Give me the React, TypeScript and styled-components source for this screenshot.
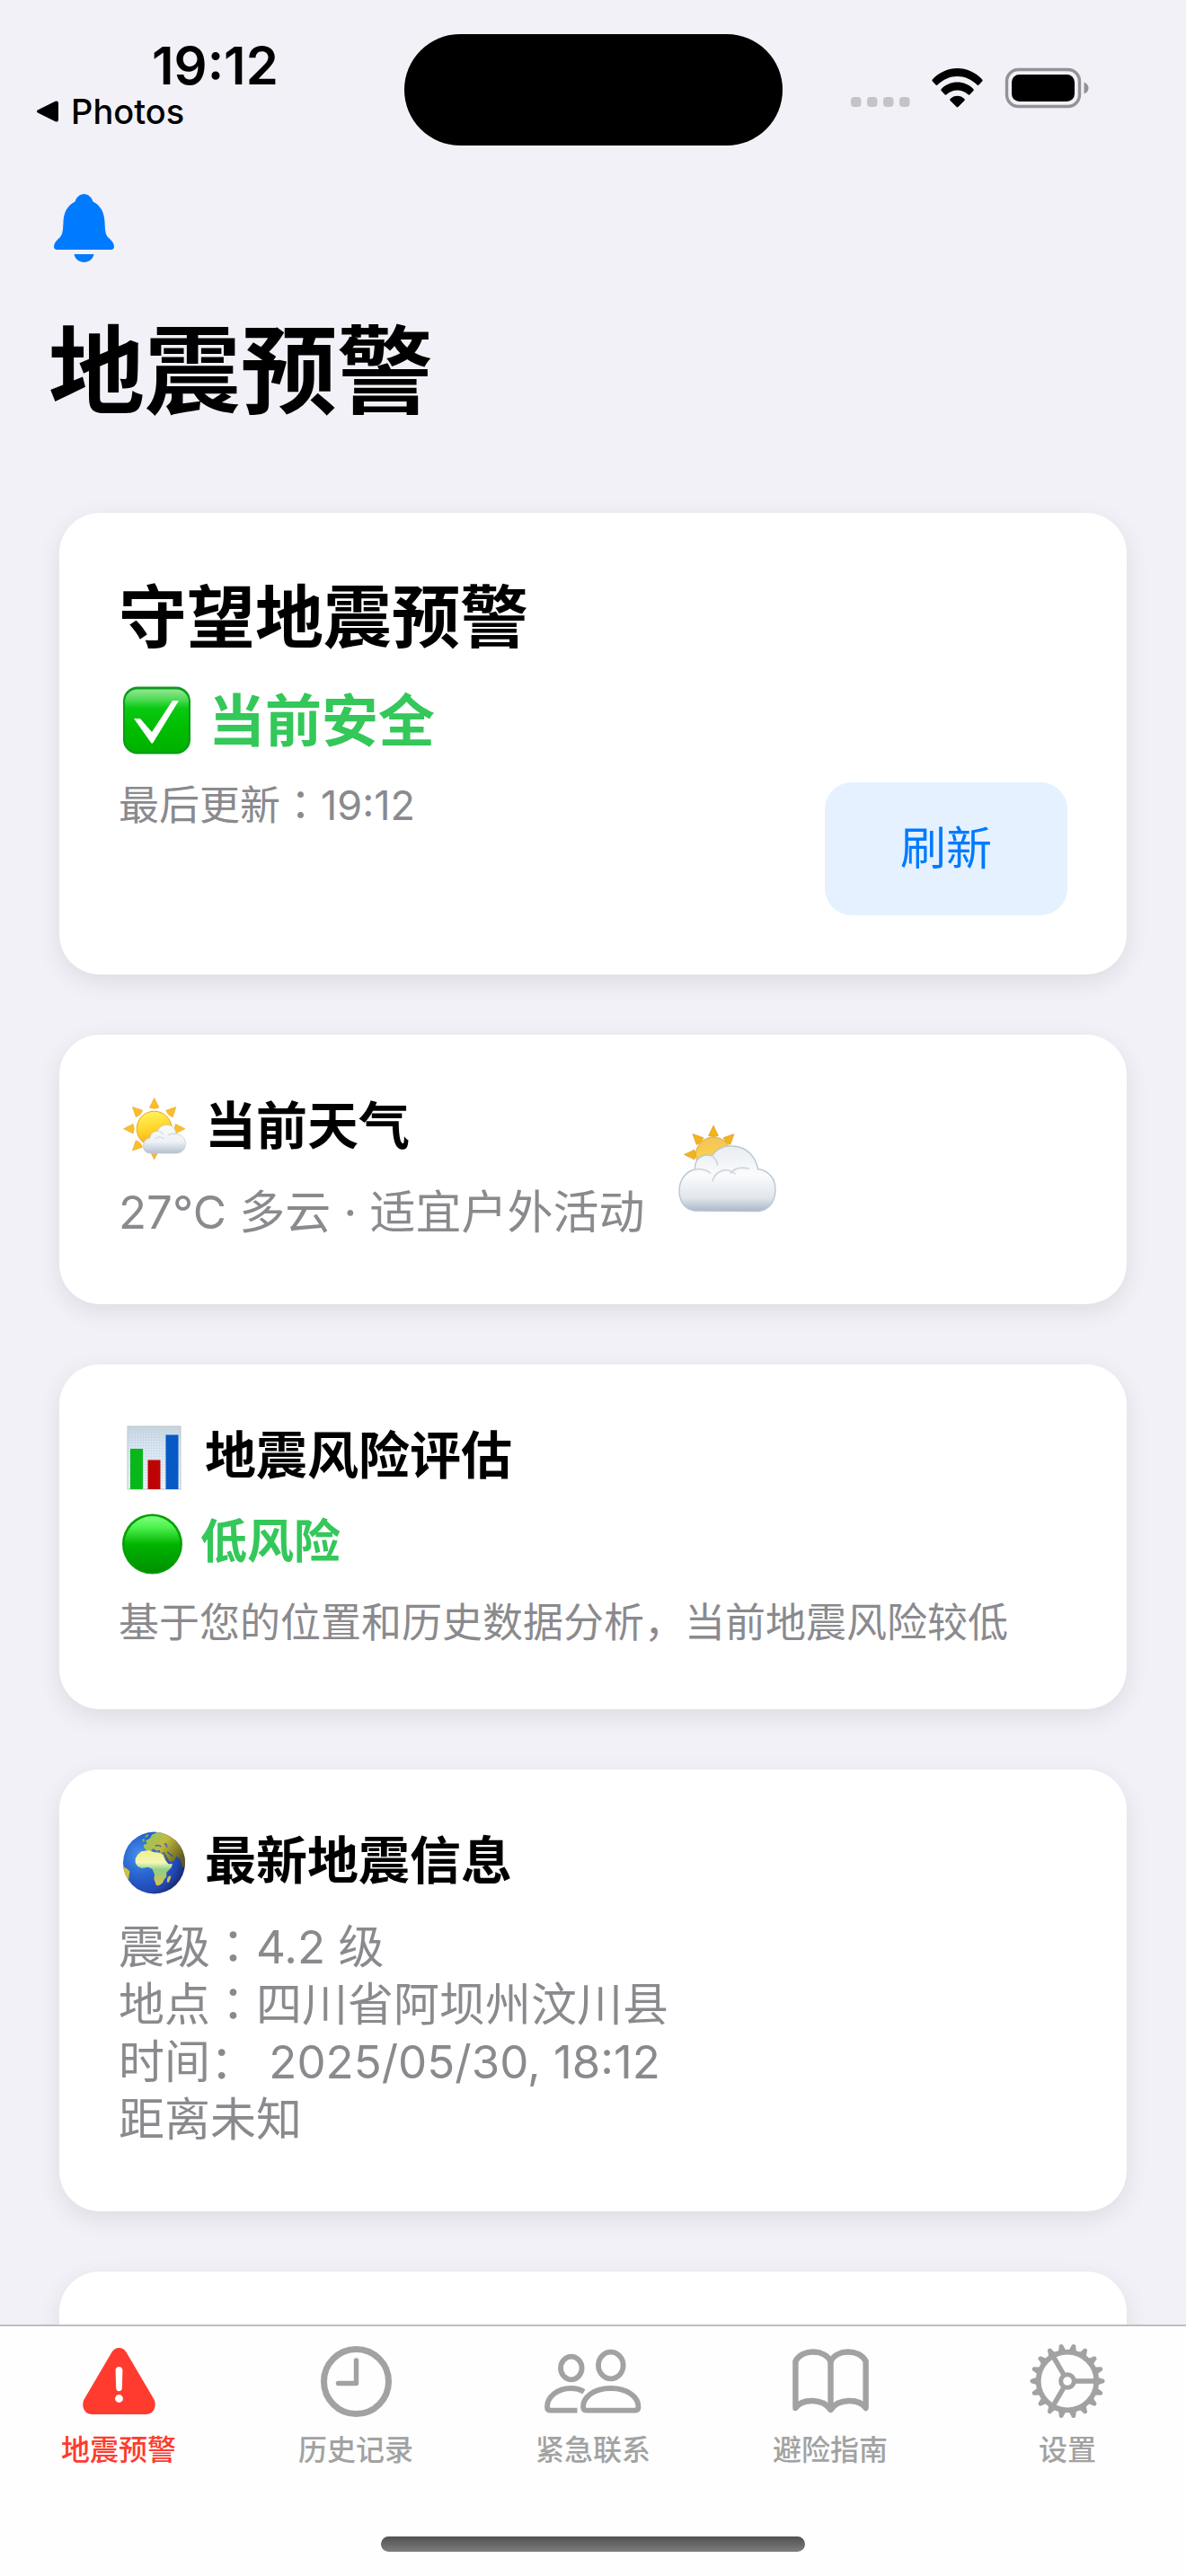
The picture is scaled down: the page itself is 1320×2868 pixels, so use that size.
import React from "react";
import styled, { createGlobalStyle } from "styled-components";

const GlobalStyle = createGlobalStyle`
  *, *::before, *::after { box-sizing: border-box; }
  body {
    margin: 0;
    background: #f2f1f7;
    color: #000;
    font-family: Inter, "Noto Sans CJK SC", sans-serif;
  }
  h1, h2, p, ul { margin: 0; padding: 0; }
  svg { display: block; flex: none; overflow: visible; }
`;

/* ---------- layout ---------- */

const Screen = styled.div`
  display: flex;
  flex-direction: column;
  height: 100vh;
`;

const StatusBar = styled.div`
  display: grid;
  grid-template-columns: 1fr 421px 1fr;
  height: 186px;
  padding-top: 38px;
  flex: none;
`;

const StatusLeft = styled.div`
  display: flex;
  flex-direction: column;
  align-items: flex-start;
  padding-left: 41px;
`;

const Clock = styled.time`
  padding-left: 128px;
  font-size: 58px;
  font-weight: 600;
  line-height: 70px;
`;

const BackLink = styled.a`
  display: flex;
  align-items: center;
  gap: 14px;
  color: inherit;
  text-decoration: none;
  font-size: 38px;
  font-weight: 500;
  line-height: 32px;
`;

const Island = styled.div`
  height: 124px;
  border-radius: 62px;
  background: #000;
`;

const StatusRight = styled.div`
  display: flex;
  align-items: center;
  gap: 25px;
  height: 44px;
  margin-top: 38px;
  padding-left: 76px;
`;

const NavBar = styled.header`
  flex: none;
`;

const NavActions = styled.div`
  display: flex;
  align-items: center;
  height: 136px;
  padding: 0 60px;
`;

const IconButton = styled.button`
  padding: 0;
  border: 0;
  background: none;
  color: #007aff;
  cursor: pointer;
`;

const PageTitle = styled.h1`
  padding: 27px 54px 0;
  font-size: 107px;
  font-weight: 700;
  line-height: 128px;
`;

const Feed = styled.main`
  display: flex;
  flex: 1;
  flex-direction: column;
  gap: 67px;
  min-height: 0;
  margin-top: 28px;
  padding: 66px 66px 67px;
  overflow-y: auto;
  scrollbar-width: none;
`;

/* ---------- cards ---------- */

const Card = styled.section`
  display: flex;
  flex: none;
  padding: 66px;
  border-radius: 45px;
  background: #fff;
  box-shadow: 0 8px 28px rgba(0, 0, 0, 0.09);
`;

const SummaryCard = styled(Card)`
  justify-content: space-between;
`;

const WeatherCard = styled(Card)`
  align-items: center;
  gap: 36px;
`;

const Stack = styled.div<{ $spaceBelow?: number }>`
  display: flex;
  flex-direction: column;
  gap: 24px;
  padding-bottom: ${(p) => p.$spaceBelow ?? 0}px;
`;

const SummaryTitle = styled.h2`
  font-size: 76px;
  font-weight: 700;
  line-height: 100px;
`;

const CardTitle = styled.h2`
  display: flex;
  align-items: center;
  gap: 16px;
  font-size: 57px;
  font-weight: 700;
  line-height: 72px;
`;

const State = styled.p<{ $large?: boolean }>`
  display: flex;
  align-items: center;
  gap: 16px;
  color: #34c759;
  font-size: ${(p) => (p.$large ? 63 : 52)}px;
  font-weight: 700;
  line-height: ${(p) => (p.$large ? 82 : 72)}px;
`;

const Note = styled.p`
  color: #8a8a8e;
  font-size: 45px;
  line-height: 60px;
`;

const Body = styled.p`
  color: #8a8a8e;
  font-size: 51px;
  line-height: 72px;
`;

const Details = styled.ul`
  padding: 4px 0;
  list-style: none;
  color: #8a8a8e;
  font-size: 51px;
  line-height: 64px;
`;

/* Full-width colon centred in its em box */
const Colon = styled.span`
  font-family: Inter, "Noto Sans CJK TC", sans-serif;
`;

const RefreshButton = styled.button`
  align-self: flex-end;
  padding: 42px 84px;
  border: 0;
  border-radius: 30px;
  background: #e5f1ff;
  color: #007aff;
  font: inherit;
  font-size: 51px;
  line-height: 64px;
  cursor: pointer;
`;

/* ---------- tab bar ---------- */

const TabBar = styled.footer`
  flex: none;
  padding-bottom: 27px;
  border-top: 2px solid #bebebf;
  background: #fefefe;
`;

const Tabs = styled.nav`
  display: grid;
  grid-template-columns: repeat(5, 1fr);
  padding-top: 16px;
`;

const Tab = styled.a<{ $active?: boolean }>`
  display: flex;
  flex-direction: column;
  align-items: center;
  gap: 12px;
  color: ${(p) => (p.$active ? "#ff3b30" : "#a2a2a2")};
  text-decoration: none;
  font-size: 32px;
  font-weight: 500;
  line-height: 40px;
`;

const TabIcon = styled.span`
  display: grid;
  place-items: center;
  height: 90px;
`;

const HomeIndicator = styled.div`
  width: 472px;
  max-width: 60%;
  height: 17px;
  margin: 76px auto 0;
  border-radius: 9px;
  background: linear-gradient(#505050, #7d7d7d);
`;

/* ---------- status and nav icons ---------- */

const BackArrow = () => (
  <svg width="24" height="24" viewBox="0 0 24 24" aria-hidden="true">
    <path d="M1.5 10.2 20.5.8Q24-.6 24 3v18q0 3.600-3.500 2.200L1.500 13.800Q-1.500 12 1.500 10.200Z" />
  </svg>
);

const SignalDots = () => (
  <svg width="65" height="44" viewBox="0 0 65 44" aria-hidden="true" fill="#c4c3c8">
    {[0, 18, 36, 54].map((x) => (
      <rect key={x} x={x} y="32" width="11.500" height="11" rx="4" />
    ))}
  </svg>
);

const Wifi = () => (
  <svg width="57" height="44" viewBox="0 0 57 44" aria-hidden="true">
    <path d="M.8 12.500C16-4.200 41-4.200 56.200 12.500q.9 1 0 2l-3.700 4q-1 .9-2 0C38 5.700 19 5.700 6.500 18.500q-1 .9-2 0l-3.700-4q-.9-1 0-2Z" />
    <path d="M10.600 23.200C20 13 37 13 46.400 23.200q.9 1 0 1.900l-3.900 4.200q-1 .9-2 0C34 22.800 23 22.800 16.500 29.300q-1 .9-2 0l-3.900-4.200q-.9-.9 0-1.900Z" />
    <path d="M20.600 34C25 29.500 32 29.500 36.400 34q.9.900 0 1.900L29.400 43q-.9.900-1.800 0L20.600 35.900q-.9-1 0-1.900Z" />
  </svg>
);

const Battery = () => (
  <svg width="93" height="44" viewBox="0 0 93 44" aria-hidden="true">
    <rect x="1.500" y="1.500" width="81" height="41" rx="13" fill="none" stroke="#939297" strokeWidth="3.400" />
    <rect x="7" y="7" width="70" height="30" rx="8.500" />
    <path d="M87.500 15.500q5 2 5 6.500t-5 6.500Z" fill="#939297" />
  </svg>
);

const Bell = () => (
  <svg width="67" height="76" viewBox="0 0 67 76" aria-hidden="true" fill="currentColor">
    <path d="M33.500 0c4.500 0 8.500 3.500 10 8.500C52 13 56 20 56.500 31c.5 10 .8 14 4 17.500 4 3.500 6.500 6.500 6.500 10 0 2.300-1.200 3.500-3.200 3.500H3.200C1.200 62 0 60.800 0 58.500c0-3.500 2.500-6.500 6.500-10 3.200-3.500 3.500-7.500 4-17.500C11 20 15 13 23.500 8.500 25 3.500 29 0 33.500 0Z" />
    <path d="M22.500 67h22c-1 5.500-5.500 9-11 9s-10-3.500-11-9Z" />
  </svg>
);

/* ---------- emoji pictures ---------- */

const CheckEmoji = () => (
  <svg width="84" height="82" viewBox="0 0 84 82" aria-hidden="true">
    <defs>
      <linearGradient id="checkFill" x1="0" y1="0" x2="0" y2="1">
        <stop offset="0" stopColor="#93e793" />
        <stop offset=".16" stopColor="#4fdb55" />
        <stop offset=".3" stopColor="#09c912" />
        <stop offset=".6" stopColor="#00be00" />
        <stop offset="1" stopColor="#00b000" />
      </linearGradient>
    </defs>
    <rect x="5" y="3.500" width="75" height="75" rx="16" fill="#0c9a1c" />
    <rect x="7" y="6.500" width="71" height="70" rx="14" fill="url(#checkFill)" />
    <path d="M17 39h7l13 15L60 19h7L38 66.500h-1.500Z" fill="#fff" />
  </svg>
);

const rays = [0, 45, 90, 135, 180, 225, 270, 315];

const SunCloudEmoji = () => (
  <svg width="80" height="72" viewBox="0 0 80 72" aria-hidden="true">
    <defs>
      <linearGradient id="sunFill" x1=".4" y1="0" x2=".6" y2="1">
        <stop offset="0" stopColor="#fff35a" />
        <stop offset=".5" stopColor="#ffd42a" />
        <stop offset="1" stopColor="#f8a01c" />
      </linearGradient>
      <linearGradient id="cloudFill" x1="0" y1="0" x2="0" y2="1">
        <stop offset="0" stopColor="#fbfcfd" />
        <stop offset=".6" stopColor="#eef1f5" />
        <stop offset="1" stopColor="#b3c0ce" />
      </linearGradient>
    </defs>
    {rays.map((a) => (
      <path key={a} d="M39.700 4.500 45 15q-5 2.500-10.500 0Z" fill={a === 180 ? "#f6b63a" : "#fbbf26"} stroke="#e9a32c" strokeWidth=".6" transform={`rotate(${a} 39.7 38.7)`} />
    ))}
    <circle cx="39.700" cy="38.700" r="19.500" fill="url(#sunFill)" stroke="#ee9f26" strokeWidth="1" />
    <path d="M35 66c-4.500 0-7.500-3.500-7.500-8 0-5 3-8.500 7.500-9 .5-5 4-8 8.500-7.500C45 37 49 34.500 53.500 34.500c6 0 10 4 10.500 10 6 .5 10.500 5 10.500 11S70 66 64.500 66Z" fill="url(#cloudFill)" stroke="#c3cdd8" strokeWidth=".8" />
    <path d="M41 50c2-3 7-3 9 0M43.500 41.500c3 .3 5 1.500 6 3.500M55 46c3-2 6-2.300 9-1.500" fill="none" stroke="#ced6df" strokeWidth="1.200" />
  </svg>
);

const CloudySunEmoji = () => (
  <svg width="112" height="102" viewBox="2 1 112 102" role="img" aria-label="多云">
    <defs>
      <linearGradient id="bigSun" x1="0" y1="0" x2="0" y2="1">
        <stop offset="0" stopColor="#f3c35c" />
        <stop offset="1" stopColor="#ffdb38" />
      </linearGradient>
      <linearGradient id="bigCloud" x1="0" y1="26" x2="0" y2="98" gradientUnits="userSpaceOnUse">
        <stop offset="0" stopColor="#e9edf1" />
        <stop offset=".45" stopColor="#fafbfc" />
        <stop offset=".8" stopColor="#e1e6ec" />
        <stop offset="1" stopColor="#aab9c9" />
      </linearGradient>
    </defs>
    {[-90, -45, 0, 45].map((a) => (
      <path key={a} d="M42 3 47.500 14.500q-5.500 2-11 0Z" fill="#f2b41c" stroke="#d99a22" strokeWidth=".6" transform={`rotate(${a} 42 35.500)`} />
    ))}
    <circle cx="42" cy="35.500" r="19.500" fill="url(#bigSun)" stroke="#e5a537" strokeWidth="1" />
    <path d="M21 98C10 96.500 4 87 4 76c0-12 7-22 17.500-24C21 42 27 35.500 36 36c1.500 0 3 .3 4.500 1C45 29.500 54 25 64 26c15 1 25 11 27.500 25.500C103 53 111 62 111 74c0 13-6.500 23-18.500 24.500Z" fill="url(#bigCloud)" stroke="#b9c5d1" strokeWidth="1.400" />
    <path d="M41 65c2-8 10-14 18-12 3 .5 5 2 7 4M61 56c5-6 12-7 20-5M40.500 37c3.500 2.500 5.500 6 6 10M21.500 52c6-1 12 0 17 4" fill="none" stroke="#ced5dd" strokeWidth="1.600" strokeLinecap="round" />
  </svg>
);

const ChartEmoji = () => (
  <svg width="80" height="72" viewBox="0 0 80 72" aria-hidden="true">
    <defs>
      <linearGradient id="chartBg" x1="0" y1="0" x2="0" y2="1">
        <stop offset="0" stopColor="#c9d5df" />
        <stop offset=".3" stopColor="#d9e6f3" />
        <stop offset="1" stopColor="#f2f5f8" />
      </linearGradient>
      <pattern id="chartGrid" width="3" height="3" patternUnits="userSpaceOnUse">
        <path d="M0 0h3M0 0v3" stroke="#b4cbdc" strokeWidth=".6" />
      </pattern>
    </defs>
    <rect x="10" y="3" width="59" height="70" fill="url(#chartBg)" />
    <rect x="10" y="3" width="59" height="70" fill="url(#chartGrid)" stroke="#bcc5cd" strokeWidth="1" />
    <rect x="13" y="28" width="14" height="45" fill="#08b81a" />
    <rect x="32.500" y="40.500" width="14" height="32.500" fill="#bd0303" />
    <rect x="52.500" y="12.500" width="14" height="60.500" fill="#0759c4" />
  </svg>
);

const GreenCircleEmoji = () => (
  <svg width="75" height="72" viewBox="0 0 75 72" aria-hidden="true">
    <defs>
      <linearGradient id="dotFill" x1="0" y1="0" x2="0" y2="1">
        <stop offset="0" stopColor="#7dff7d" />
        <stop offset=".2" stopColor="#4cf24c" />
        <stop offset=".5" stopColor="#00b400" />
        <stop offset="1" stopColor="#008f00" />
      </linearGradient>
    </defs>
    <circle cx="37.500" cy="38" r="33.500" fill="#05a005" />
    <ellipse cx="37.500" cy="38.500" rx="31" ry="31.500" fill="url(#dotFill)" />
  </svg>
);

const GlobeEmoji = () => (
  <svg width="80" height="72" viewBox="0 0 80 72" aria-hidden="true">
    <defs>
      <radialGradient id="ocean" cx=".28" cy=".38" r=".75">
        <stop offset="0" stopColor="#4a94ea" />
        <stop offset=".4" stopColor="#2a66d2" />
        <stop offset=".8" stopColor="#2148b4" />
        <stop offset="1" stopColor="#182a70" />
      </radialGradient>
      <linearGradient id="africa" x1="0" y1="0" x2="0" y2="1">
        <stop offset="0" stopColor="#f0ee8c" />
        <stop offset=".35" stopColor="#f3f7b4" />
        <stop offset=".55" stopColor="#8fce86" />
        <stop offset="1" stopColor="#dcbf4a" />
      </linearGradient>
      <linearGradient id="eurasia" x1="0" y1="0" x2="1" y2=".6">
        <stop offset="0" stopColor="#8ccb6a" />
        <stop offset=".5" stopColor="#c2b73e" />
        <stop offset="1" stopColor="#5e5a1e" />
      </linearGradient>
      <clipPath id="globeClip">
        <circle cx="39.500" cy="38" r="34.500" />
      </clipPath>
    </defs>
    <circle cx="39.500" cy="38" r="34.500" fill="url(#ocean)" />
    <g clipPath="url(#globeClip)">
      <g transform="scale(.33333) translate(-21 -18)">
        <path d="M106 82 104 72l12-4-4-10 14-8 6-12 22-10 30 6 36 26 24 40 4 40-14 6-8-26-12-10-8 16-14 4-14-12-10-18-8-2-2-8-8 0 4 10-8-10-10-6-8 10-8 2Z" fill="url(#eurasia)" />
        <path d="m77 118 8-14 12-10 26-4 14 6 22 2 10 6 8 18 10 14 14 0-4 12-16 16 0 14-8 10-6 12-12 8-8 0-8-22 2-16-8-18-14-6-20 4-14-6-8-12Z" fill="url(#africa)" />
        <path d="m192 174 4 6-8 18-6-2 2-14Z" fill="#c9c554" />
        <path d="m36 144 14 8 8 8-4 30-8 4-10-20Z" fill="#cfc23c" />
        <path d="m98 56 6-6 6 6-6 8Zm10-12 8-8 6 4-8 8Z" fill="#6fae5c" />
        <path d="m171 96 12 22 8 14M184 96l18 14" fill="none" stroke="#2a5590" strokeWidth="4" />
        <path d="M143 76q10-6 20 2M174 68q8 2 8 12" fill="none" stroke="#3b71a8" strokeWidth="5" />
      </g>
    </g>
  </svg>
);

/* ---------- tab icons ---------- */

const WarningIcon = () => (
  <svg width="81" height="74" viewBox="0 0 81 74" aria-hidden="true">
    <path d="M32.500 4.800C36-1.600 45-1.600 48.500 4.800L79.500 57.500C83 65 79 74 71 74H10C2 74-2 65 1.500 57.500Z" fill="currentColor" />
    <path d="M40.500 21c2.300 0 4 1.700 3.900 4l-.6 20c-.1 2-1.500 3.300-3.300 3.300s-3.200-1.300-3.300-3.300l-.6-20c-.1-2.300 1.600-4 3.900-4Z" fill="#fff" />
    <circle cx="40.500" cy="56.500" r="4.400" fill="#fff" />
  </svg>
);

const ClockIcon = () => (
  <svg width="79" height="79" viewBox="0 0 79 79" aria-hidden="true" fill="none" stroke="currentColor" strokeLinecap="round" strokeLinejoin="round">
    <circle cx="39.500" cy="39.500" r="36" strokeWidth="7" />
    <path d="M39.500 16v25.500H19.500" strokeWidth="5.400" />
  </svg>
);

const PeopleIcon = () => (
  <svg width="108" height="90" viewBox="0 0 108 90" aria-hidden="true" fill="none" stroke="currentColor" strokeWidth="5.800" strokeLinejoin="round">
    <ellipse cx="29.800" cy="30.500" rx="11.800" ry="12.800" />
    <ellipse cx="73.800" cy="27.500" rx="13.800" ry="14.800" />
    <path d="M36.500 77.700H7q-4 0-4-4C3 63 14 53 29.500 53c6 0 10.500 1.500 14.500 3.800" />
    <path d="M47.500 77.700h52.500q4.500 0 4.500-4C104.500 63 93 53 73.800 53S43 63 43 73.700q0 4 4.500 4Z" />
  </svg>
);

const BookIcon = () => (
  <svg width="85" height="72" viewBox="0 0 85 72" aria-hidden="true" fill="none" stroke="currentColor" strokeWidth="6.400" strokeLinejoin="round">
    <path d="M42.500 14C36 .5 11-.5 3.400 14v52C11 55 34 55 42.500 68 51 55 74 55 81.600 66V14C74-.5 49 .5 42.500 14Z" />
    <path d="M42.500 14v54" />
  </svg>
);

const GearIcon = () => (
  <svg width="84" height="84" viewBox="-42 -42 84 84" aria-hidden="true" fill="none" stroke="currentColor">
    <circle r="32.300" strokeWidth="5.800" />
    <circle r="7.300" strokeWidth="5" />
    {[0, 120, 240].map((a) => (
      <path key={a} d="M9 0H31" strokeWidth="5.600" transform={`rotate(${a})`} />
    ))}
    {Array.from({ length: 18 }, (_, i) => (
      <path key={i} d="M34 -4.200 40.800 -2Q42.500 0 40.800 2L34 4.200Z" fill="currentColor" stroke="none" transform={`rotate(${i * 20})`} />
    ))}
  </svg>
);

const tabs = [
  { label: "地震预警", icon: <WarningIcon />, active: true },
  { label: "历史记录", icon: <ClockIcon /> },
  { label: "紧急联系", icon: <PeopleIcon /> },
  { label: "避险指南", icon: <BookIcon /> },
  { label: "设置", icon: <GearIcon /> },
];

export default function App() {
  return (
    <Screen>
      <GlobalStyle />
      <StatusBar>
        <StatusLeft>
          <Clock>19:12</Clock>
          <BackLink href="#photos">
            <BackArrow />
            Photos
          </BackLink>
        </StatusLeft>
        <Island />
        <StatusRight>
          <SignalDots />
          <Wifi />
          <Battery />
        </StatusRight>
      </StatusBar>

      <NavBar>
        <NavActions>
          <IconButton type="button" aria-label="通知">
            <Bell />
          </IconButton>
        </NavActions>
        <PageTitle>地震预警</PageTitle>
      </NavBar>

      <Feed>
        <SummaryCard>
          <Stack $spaceBelow={92}>
            <SummaryTitle>守望地震预警</SummaryTitle>
            <State $large>
              <CheckEmoji />
              当前安全
            </State>
            <Note>
              最后更新<Colon>：</Colon>19:12
            </Note>
          </Stack>
          <RefreshButton type="button">刷新</RefreshButton>
        </SummaryCard>

        <WeatherCard>
          <Stack>
            <CardTitle>
              <SunCloudEmoji />
              当前天气
            </CardTitle>
            <Body>27°C 多云 · 适宜户外活动</Body>
          </Stack>
          <CloudySunEmoji />
        </WeatherCard>

        <Card>
          <Stack>
            <CardTitle>
              <ChartEmoji />
              地震风险评估
            </CardTitle>
            <State>
              <GreenCircleEmoji />
              低风险
            </State>
            <Note>基于您的位置和历史数据分析，当前地震风险较低</Note>
          </Stack>
        </Card>

        <Card>
          <Stack>
            <CardTitle>
              <GlobeEmoji />
              最新地震信息
            </CardTitle>
            <Details>
              <li>
                震级<Colon>：</Colon>4.2 级
              </li>
              <li>
                地点<Colon>：</Colon>四川省阿坝州汶川县
              </li>
              <li>时间： 2025/05/30, 18:12</li>
              <li>距离未知</li>
            </Details>
          </Stack>
        </Card>

        <Card />
      </Feed>

      <TabBar>
        <Tabs>
          {tabs.map((t) => (
            <Tab key={t.label} href="#" $active={t.active} aria-current={t.active ? "page" : undefined}>
              <TabIcon>{t.icon}</TabIcon>
              {t.label}
            </Tab>
          ))}
        </Tabs>
        <HomeIndicator />
      </TabBar>
    </Screen>
  );
}
